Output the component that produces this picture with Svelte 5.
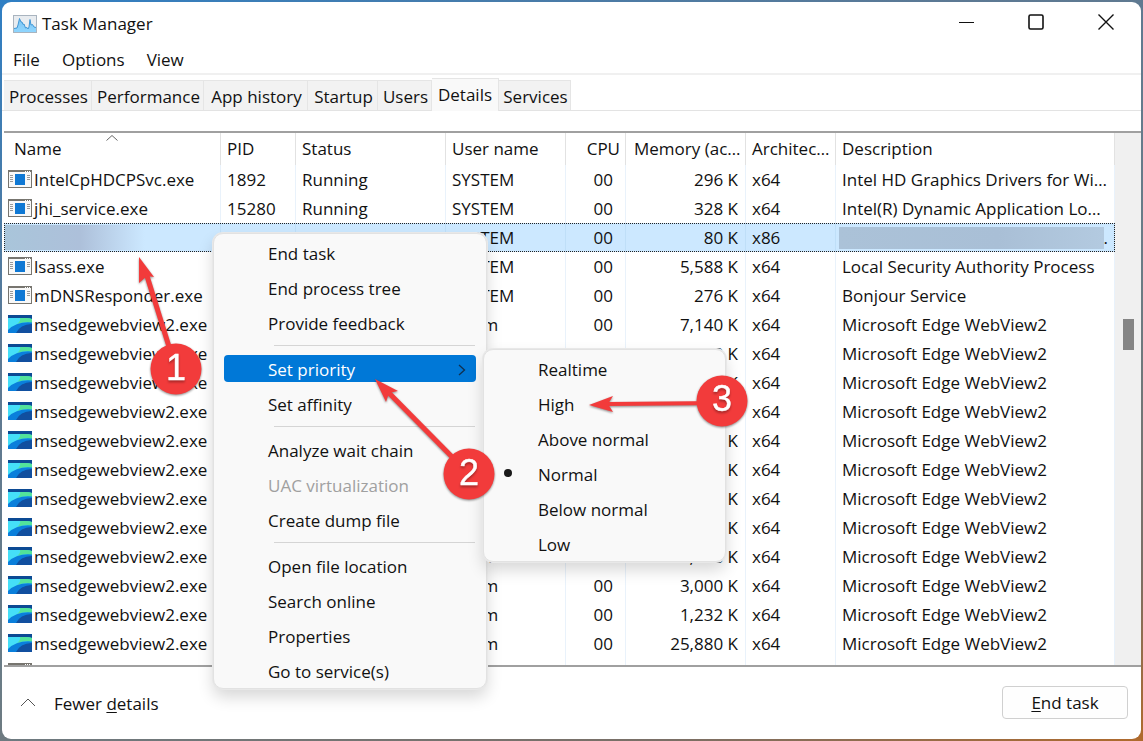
<script lang="ts">
    type Proc = { name: string, pid: string, user: string, mem: string, arch: string, desc: string, edge?: boolean, selected?: boolean };

    const tabs = [
        {label: 'Processes', width: 88},
        {label: 'Performance', width: 112},
        {label: 'App history', width: 104},
        {label: 'Startup', width: 70},
        {label: 'Users', width: 54},
        {label: 'Details', width: 67},
        {label: 'Services', width: 72},
    ];
    let tab = $state('Details');

    const edge = (pid: string, mem: string): Proc => ({
        name: 'msedgewebview2.exe', pid, user: 'Adam', mem, arch: 'x64', desc: 'Microsoft Edge WebView2', edge: true
    });

    const rows: Proc[] = [
        {name: 'IntelCpHDCPSvc.exe', pid: '1892', user: 'SYSTEM', mem: '296 K', arch: 'x64', desc: 'Intel HD Graphics Drivers for Windows(R)'},
        {name: 'jhi_service.exe', pid: '15280', user: 'SYSTEM', mem: '328 K', arch: 'x64', desc: 'Intel(R) Dynamic Application Loader Host'},
        {name: '', pid: '1848', user: 'SYSTEM', mem: '80 K', arch: 'x86', desc: '', selected: true},
        {name: 'lsass.exe', pid: '972', user: 'SYSTEM', mem: '5,588 K', arch: 'x64', desc: 'Local Security Authority Process'},
        {name: 'mDNSResponder.exe', pid: '4212', user: 'SYSTEM', mem: '276 K', arch: 'x64', desc: 'Bonjour Service'},
        edge('9120', '7,140 K'),
        edge('9344', '288 K'),
        edge('9512', '944 K'),
        edge('9788', '612 K'),
        edge('10024', '820 K'),
        edge('10260', '716 K'),
        edge('10388', '504 K'),
        edge('10712', '932 K'),
        edge('11040', '1,808 K'),
        edge('11276', '3,000 K'),
        edge('11532', '1,232 K'),
        edge('11896', '25,880 K'),
        {name: '', pid: '', user: '', mem: '', arch: '', desc: ''},
    ];

    const menu = [
        ['End task', 'End process tree', 'Provide feedback'],
        ['Set priority', 'Set affinity'],
        ['Analyze wait chain', 'UAC virtualization', 'Create dump file'],
        ['Open file location', 'Search online', 'Properties', 'Go to service(s)'],
    ];
    const priorities = ['Realtime', 'High', 'Above normal', 'Normal', 'Below normal', 'Low'];
    let priority = $state('Normal');
</script>

<div class="desktop">
    <div class="window">
        <header class="titlebar">
            <svg class="logo" width="24" height="18" viewBox="0 0 24 18">
                <defs>
                    <linearGradient id="graph" x1="0" y1="0" x2="0" y2="1">
                        <stop offset="0" stop-color="#7cc4f2"/>
                        <stop offset="1" stop-color="#8fd6ff"/>
                    </linearGradient>
                </defs>
                <rect x=".5" y=".5" width="23" height="17" fill="#e8ecf0" stroke="#a9b4bf"/>
                <path d="M1 13.5L4 13 5 10 6.500 3.500 8 7 9 7 10 9.500 11 9 12.500 13 14 12.500 15 14 16 12 17 4.500 18 10 19.500 9.500 21 12 23 12.500V17H1z" fill="url(#graph)"/>
                <path d="M1 13.5L4 13 5 10 6.500 3.500 8 7 9 7 10 9.500 11 9 12.500 13 14 12.500 15 14 16 12 17 4.500 18 10 19.500 9.500 21 12 23 12.500" fill="none" stroke="#3f97d6"/>
            </svg>
            <h1>Task Manager</h1>
            <div class="caption">
                <button aria-label="Minimize"><svg width="16" height="16"><path d="M1 8.500h15"/></svg></button>
                <button aria-label="Maximize"><svg width="16" height="16"><rect x="1" y="1" width="14" height="14" rx="1.500" stroke-width="1.600"/></svg></button>
                <button aria-label="Close"><svg width="16" height="16"><path d="M.5 .5l15 15M15.500 .5l-15 15" stroke-width="1.400"/></svg></button>
            </div>
        </header>

        <nav class="menubar">
            <button>File</button>
            <button>Options</button>
            <button>View</button>
        </nav>

        <div class="tabs" role="tablist">
            {#each tabs as t}
                <button role="tab" aria-selected={tab === t.label} class:active={tab === t.label}
                        style="width: {t.width}px" onclick={() => tab = t.label}>{t.label}</button>
            {/each}
        </div>

        <div class="list">
            <div class="scroller">
                <table>
                    <colgroup>
                        <col class="c-name"><col class="c-pid"><col class="c-status"><col class="c-user">
                        <col class="c-cpu"><col class="c-mem"><col class="c-arch"><col>
                    </colgroup>
                    <thead>
                    <tr>
                        <th class="sorted">Name
                            <svg class="sort" width="12" height="6"><path d="M.5 5.500 6 .5l5.500 5" fill="none" stroke="#666"/></svg>
                        </th>
                        <th>PID</th>
                        <th>Status</th>
                        <th>User name</th>
                        <th class="num">CPU</th>
                        <th class="memhead">Memory (active private working set)</th>
                        <th>Architecture</th>
                        <th>Description</th>
                    </tr>
                    </thead>
                    <tbody>
                    {#each rows as r}
                        <tr class:selected={r.selected}>
                            <td class="name">
                                {#if r.selected}
                                    <span class="smudge fade"></span>
                                {:else}
                                    <span class="proc">
                                        {#if r.edge}
                                            <svg width="24" height="18" viewBox="0 0 24 18">
                                                <rect width="24" height="18" fill="#0c4a94"/>
                                                <path d="M0 3h17q4 0 7 1v5Q11 7 0 17z" fill="#45dff8"/>
                                                <path d="M12 3h6q4 0 6 1v4Q17 6 9 9q4-3 3-6z" fill="#52e39a"/>
                                                <path d="M0 18v-3Q9 6 24 7.500v2Q12 10 9 18z" fill="#0a7fdb"/>
                                                <path d="M8 18Q12 9.500 24 9v9z" fill="#114f9f"/>
                                            </svg>
                                        {:else}
                                            <svg width="24" height="18" viewBox="0 0 24 18">
                                                <rect x=".5" y=".5" width="23" height="17" fill="#f8f8f8" stroke="#77756f"/>
                                                <path d="M1 1.500h22" stroke="#77756f"/>
                                                <path d="M17 1.500h5" stroke="#fff" stroke-dasharray="1 1"/>
                                                <path d="M2 5.500h3M2 7.500h3M2 9.500h3M2 11.500h3M19 5.500h3M19 7.500h3M19 9.500h3" stroke="#999"/>
                                                <rect x="7" y="4" width="10" height="11" fill="#0f78d4"/>
                                            </svg>
                                        {/if}
                                        {r.name}
                                    </span>
                                {/if}
                            </td>
                            <td>{r.pid}</td>
                            <td>{r.pid ? 'Running' : ''}</td>
                            <td>{r.user}</td>
                            <td class="num cpu">{r.pid ? '00' : ''}</td>
                            <td class="num">{r.mem}</td>
                            <td>{r.arch}</td>
                            <td class:hidden-desc={r.selected}>{#if r.selected}<span class="smudge"></span>.{:else}{r.desc}{/if}</td>
                        </tr>
                    {/each}
                    </tbody>
                </table>
            </div>
            <div class="scrollbar"><div class="thumb"></div></div>
        </div>

        <footer>
            <button class="fewer">
                <svg width="16" height="9"><path d="M1 8l7-7 7 7" fill="none" stroke="#555"/></svg>
                <span>Fewer <u>d</u>etails</span>
            </button>
            <button class="end"><u>E</u>nd task</button>
        </footer>
    </div>

    <div class="popup context" role="menu">
        {#each menu as group, i}
            {#if i > 0}<hr>{/if}
            {#each group as item}
                <button role="menuitem" class:hot={item === 'Set priority'} disabled={item === 'UAC virtualization'}>
                    {item}
                    {#if item === 'Set priority'}
                        <svg width="8" height="12"><path d="M1 1l5.500 5L1 11" fill="none" stroke="#10304f" stroke-width="1.300"/></svg>
                    {/if}
                </button>
            {/each}
        {/each}
    </div>

    <div class="popup submenu" role="menu">
        {#each priorities as p}
            <button role="menuitemradio" aria-checked={priority === p} onclick={() => priority = p}>
                {#if priority === p}<span class="dot"></span>{/if}{p}
            </button>
        {/each}
    </div>

    <!-- numbered steps with arrows -->
    <svg class="steps" width="760" height="520">
        <g fill="#f23b3b" stroke="#f23b3b">
            <path d="M176 369L147 276" stroke-width="5"/>
            <path d="M139 257L154 277 147 276 139 283z" stroke="none"/>
            <path d="M469 474L389 393" stroke-width="5"/>
            <path d="M375 379L398 391 389 393 386 402z" stroke="none"/>
            <path d="M722 403L608 404" stroke-width="4"/>
            <path d="M589 405L613 396 608 404 613 412z" stroke="none"/>
        </g>
        <g class="badges">
            <circle cx="176" cy="369" r="25.500"/>
            <circle cx="469" cy="474" r="25.500"/>
            <circle cx="722" cy="401" r="25.500"/>
        </g>
        <g class="digits">
            <text x="176" y="380">1</text>
            <text x="469" y="485">2</text>
            <text x="722" y="411">3</text>
        </g>
    </svg>
</div>

<style>
    :global(body) {
        margin: 0;
        overflow: hidden;
    }

    .desktop {
        position: relative;
        box-sizing: border-box;
        height: 100vh;
        padding: 2px;
        background: linear-gradient(160deg, #2f7fc4, #5c7994 30%, #6b7c85 60%, #7a6f66 85%, #b06a2c);
        font-family: "Open Sans", "Segoe UI", sans-serif;
        font-size: 17px;
        color: #111;
    }

    button {
        font: inherit;
        color: inherit;
        background: none;
        border: 0;
        padding: 0;
    }

    .window {
        height: 100%;
        display: flex;
        flex-direction: column;
        background: #fff;
        border-radius: 9px;
        overflow: hidden;
    }

    .titlebar {
        height: 43px;
        flex: none;
        display: flex;
        align-items: center;
        padding-left: 11px;
    }

    h1 {
        margin: 0 0 0 5px;
        font-size: 17px;
        font-weight: 400;
    }

    .caption {
        margin-left: auto;
        align-self: flex-start;
        display: flex;
    }

    .caption button {
        width: 70px;
        height: 40px;
        display: flex;
        align-items: center;
        justify-content: center;
    }

    .caption svg {
        fill: none;
        stroke: #111;
    }

    .menubar {
        height: 28px;
        flex: none;
        display: flex;
        align-items: center;
        gap: 22px;
        padding: 0 11px;
        border-bottom: 2px solid #f0f0f0;
    }

    .menubar button {
        padding-top: 1px;
    }

    .tabs {
        flex: none;
        display: flex;
        align-items: flex-end;
        height: 35px;
        padding-left: 2px;
        border-bottom: 1px solid #e3e3e3;
    }

    .tabs button {
        box-sizing: border-box;
        height: 30px;
        background: #f2f2f2;
        border: 1px solid #e5e5e5;
        border-width: 1px 1px 0 0;
        white-space: nowrap;
        display: flex;
        align-items: center;
        justify-content: center;
        padding: 1px 0 0 2px;
    }

    .tabs button.active {
        height: 33px;
        margin-bottom: -1px;
        padding: 0 0 2px;
        background: #f9f9f9;
    }

    .list {
        flex: 1;
        min-height: 0;
        display: flex;
        margin: 20px 0 0 2px;
        border: solid #a0a0a0;
        border-width: 2px 0;
    }

    .scroller {
        flex: 1;
        min-width: 0;
        overflow: hidden;
    }

    table {
        width: 100%;
        table-layout: fixed;
        border-collapse: separate;
        border-spacing: 0;
    }

    .c-name { width: 217px }
    .c-pid { width: 75px }
    .c-status { width: 150px }
    .c-user { width: 120px }
    .c-cpu { width: 60px }
    .c-mem { width: 120px }
    .c-arch { width: 90px }

    th, td {
        box-sizing: border-box;
        height: 29px;
        padding: 0 6px;
        line-height: 29px;
        text-align: left;
        font-weight: 400;
        white-space: nowrap;
        overflow: hidden;
        text-overflow: ellipsis;
        border-right: 1px solid #e9f2fb;
    }

    th {
        height: 32px;
        padding: 1px 5px 2px 6px;
        border-color: #e2e2e2;
    }

    th.sorted {
        position: relative;
        padding-left: 10px;
    }

    .sort {
        position: absolute;
        top: 2px;
        left: calc(50% - 6px);
    }

    th.memhead {
        padding-left: 8px;
        padding-right: 0;
    }

    td.name {
        padding: 0 0 0 4px;
    }

    .num {
        text-align: right;
    }

    td.num {
        padding-right: 7px;
    }

    td.cpu {
        padding-right: 12px;
    }

    .proc {
        display: flex;
        align-items: center;
        gap: 2px;
        height: 29px;
    }

    .proc svg {
        flex: none;
        margin-bottom: 2px;
    }

    tr.selected {
        background: #cce8ff;
        outline: 1px dotted #222;
        outline-offset: -1px;
    }

    tr.selected td {
        border-color: #bfdff8;
    }

    .smudge {
        flex: 1;
        height: 22px;
        background: linear-gradient(90deg, #abc2d8, #a9bfd6 60%, #b3cae0);
    }

    .smudge.fade {
        display: block;
        height: 25px;
        background: linear-gradient(90deg, #a9c5da, #adc0da 35%, #cce8ff 65%);
    }

    tr.selected td.name {
        padding-left: 1px;
    }

    td.hidden-desc {
        padding-left: 3px;
        display: flex;
        align-items: center;
    }

    .scrollbar {
        width: 26px;
        background: #f0f0f0;
    }

    .thumb {
        width: 11px;
        height: 31px;
        margin: 186px auto 0;
        background: #858585;
    }

    footer {
        flex: none;
        height: 72px;
        display: flex;
        align-items: center;
        justify-content: space-between;
        box-sizing: border-box;
        padding: 0 13px 2px 18px;
    }

    .fewer {
        display: flex;
        align-items: center;
        gap: 18px;
    }

    .fewer span {
        padding-top: 2px;
    }

    .end {
        box-sizing: border-box;
        width: 126px;
        height: 33px;
        border: 1px solid #d0d0d0;
        border-radius: 4px;
        background: #fefefe;
    }

    u {
        text-underline-offset: 2px;
    }

    .popup {
        position: absolute;
        box-sizing: border-box;
        display: flex;
        flex-direction: column;
        background: #f9f9f9;
        border: 1px solid #e2e2e2;
        border-radius: 10px;
        box-shadow: 0 0 0 1px #e8e8e8, 0 8px 16px rgba(0, 0, 0, .16);
    }

    .context {
        left: 213px;
        top: 233px;
        width: 274px;
        padding: 1px 10px 0;
    }

    .submenu {
        left: 483px;
        top: 349px;
        width: 243px;
        padding: 1px 10px 0;
    }

    .popup button {
        position: relative;
        box-sizing: border-box;
        height: 27px;
        margin: 4px 0;
        padding: 2px 0 0 44px;
        border-radius: 4px;
        display: flex;
        align-items: center;
        line-height: 25px;
        text-align: left;
    }

    .popup button:disabled {
        color: #a0a0a0;
    }

    .popup button.hot {
        background: #0078d7;
        color: #fff;
    }

    .popup button.hot svg {
        margin-left: auto;
        margin-right: 10px;
    }

    .popup hr {
        width: 201px;
        margin: 5px 1px 5px auto;
        border: 0;
        border-top: 1px solid #d5d5d5;
    }

    .dot {
        position: absolute;
        left: 10px;
        top: 9px;
        width: 8px;
        height: 8px;
        border-radius: 50%;
        background: #1a1a1a;
    }

    .steps {
        position: absolute;
        left: 0;
        top: 0;
        pointer-events: none;
        filter: drop-shadow(0 1px 1px rgba(0, 0, 0, .45));
    }

    .badges {
        fill: #f23b3b;
    }

    .digits {
        fill: #fff;
        stroke: #fff;
        stroke-width: .4px;
        font-family: "Liberation Sans", Arial, sans-serif;
        font-size: 36px;
        text-anchor: middle;
        filter: drop-shadow(0 2px 1px rgba(0, 0, 0, .3));
    }
</style>
